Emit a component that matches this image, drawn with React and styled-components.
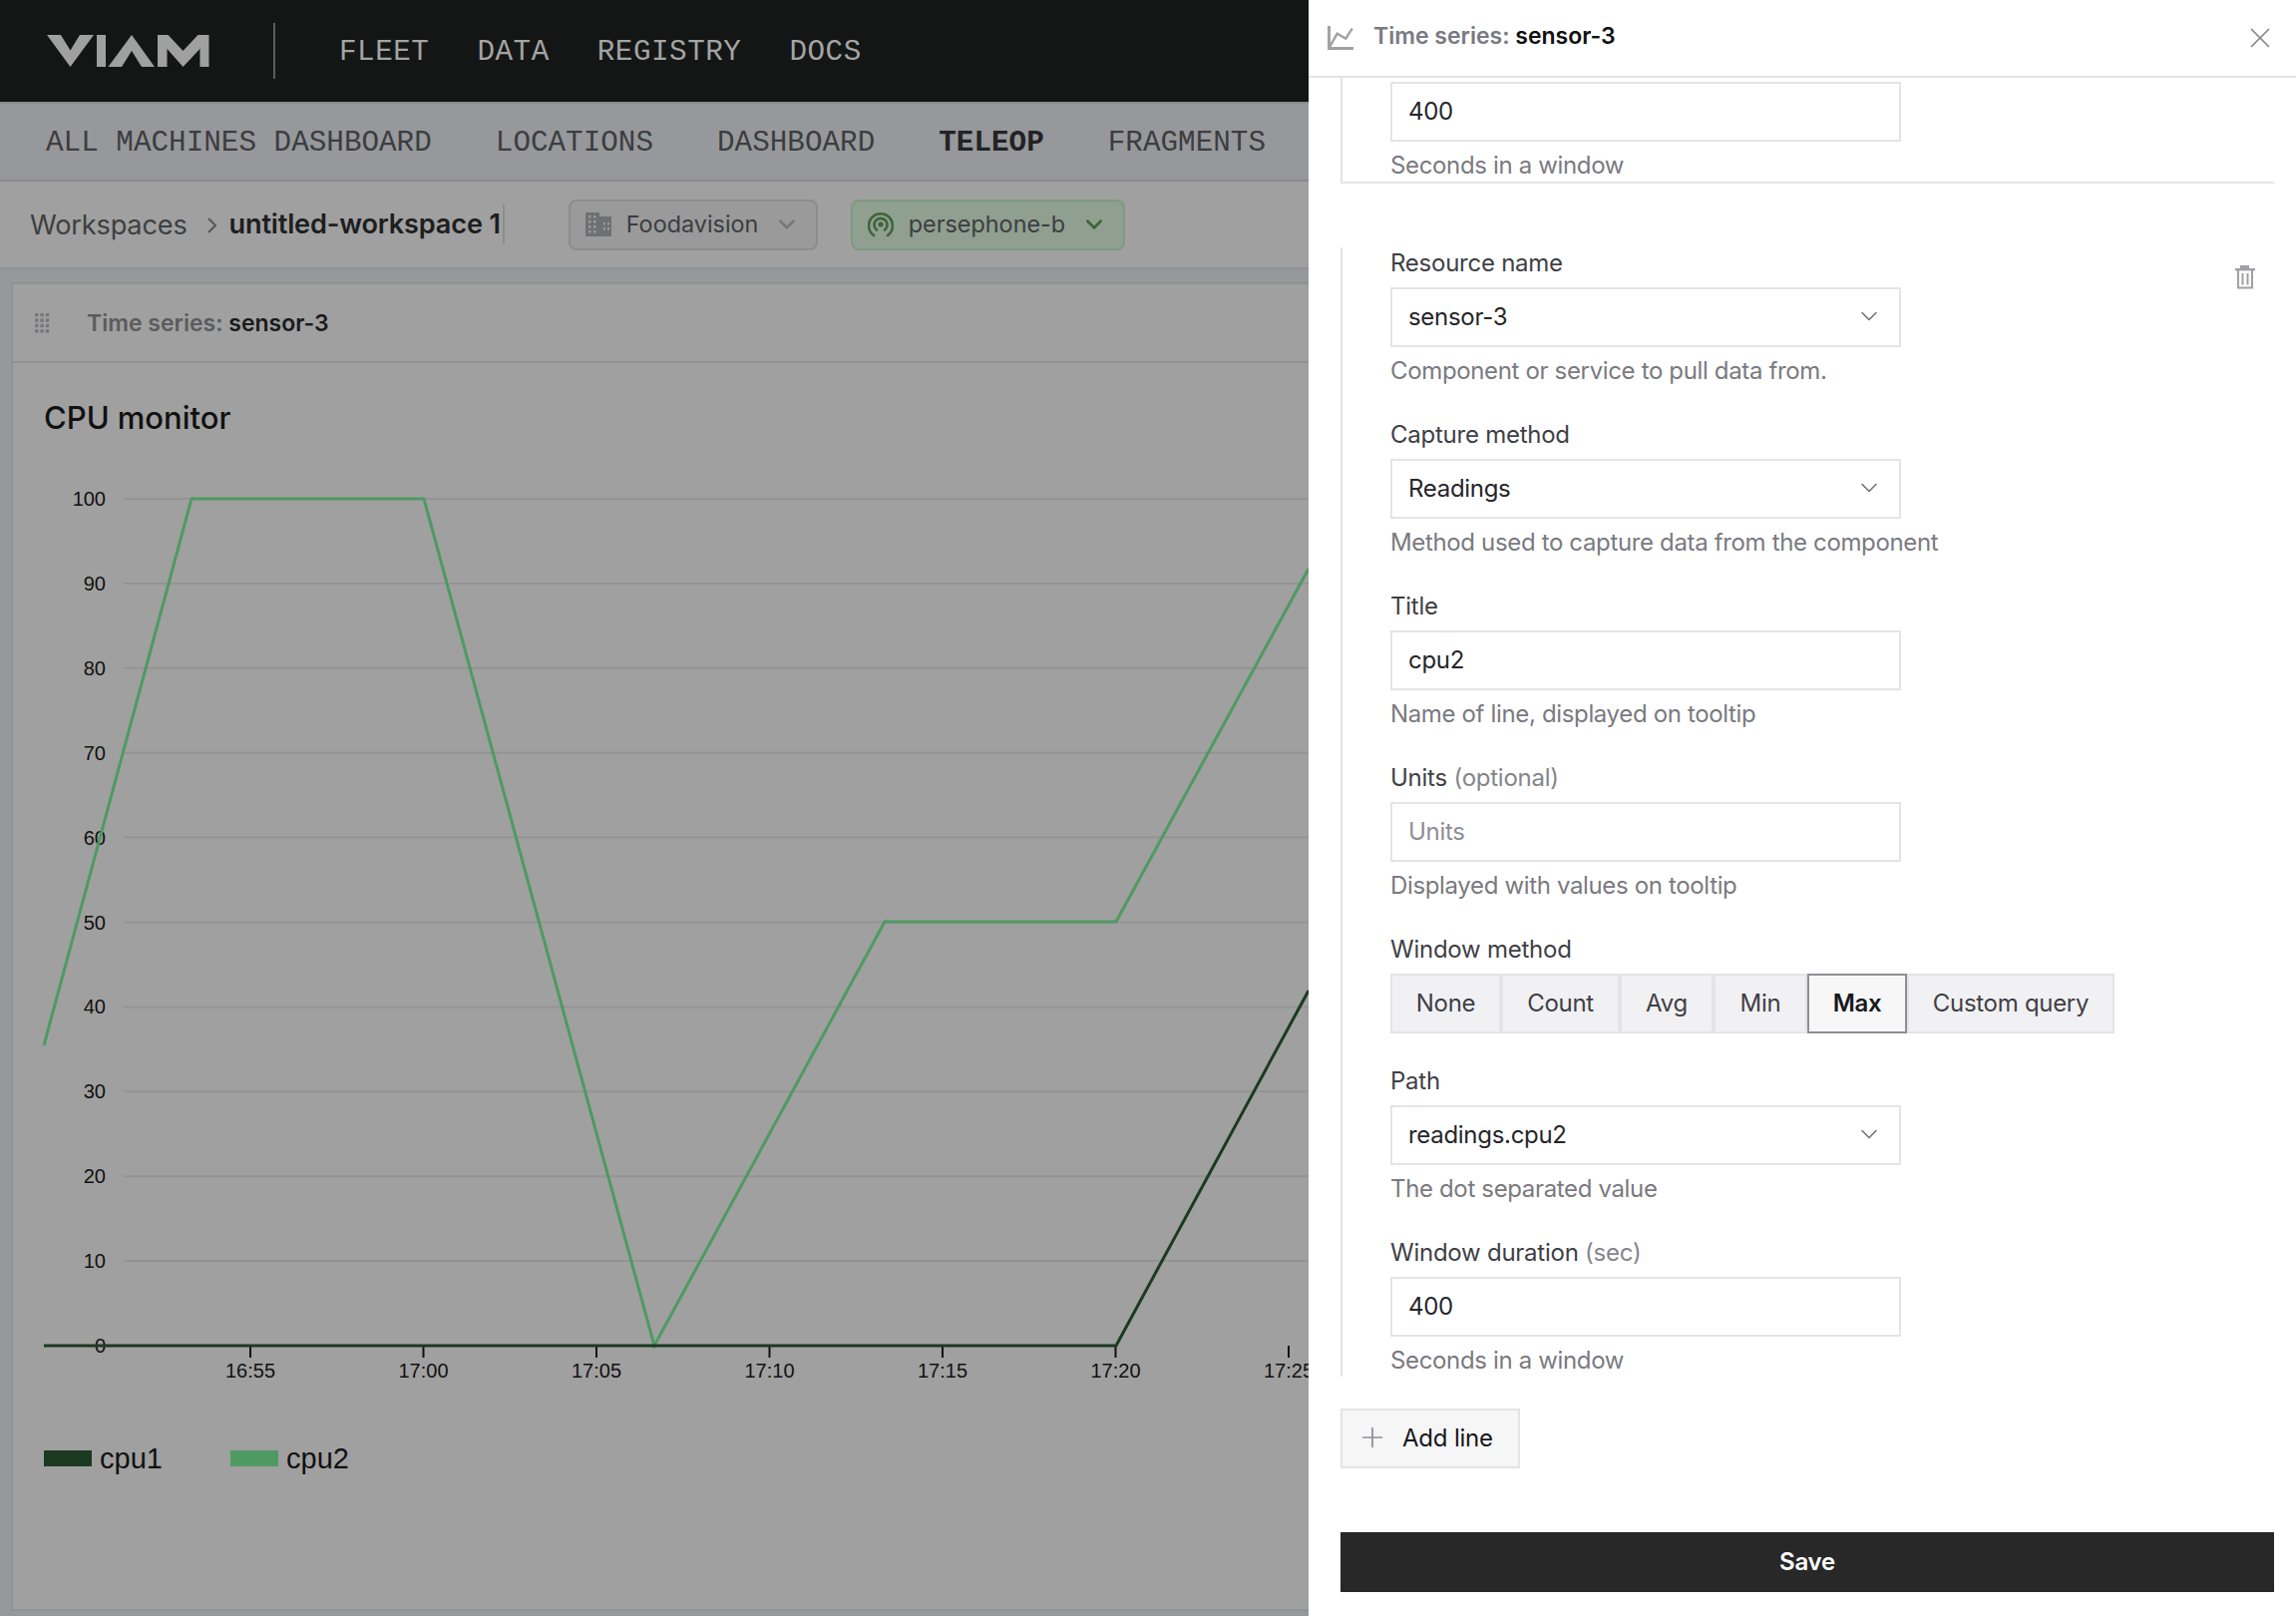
import React from "react";
import styled, { createGlobalStyle } from "styled-components";
import { ChevronDown, X, Plus } from "lucide-react";

const GlobalStyle = createGlobalStyle`
  html, body { margin: 0; padding: 0; background: #fff; }
  * { box-sizing: border-box; }
`;

const SANS = `"Inter", "Liberation Sans", sans-serif`;
const MONO = `"Liberation Mono", "DejaVu Sans Mono", monospace`;

const Page = styled.div`
  display: flex;
  width: 2302px;
  height: 1620px;
  overflow: hidden;
  font-family: ${SANS};
`;

const Dimmed = styled.div`
  width: 1312px;
  flex: 0 0 1312px;
  overflow: hidden;
  background: #97989b;
  display: flex;
  flex-direction: column;
`;

const TopBar = styled.div`
  height: 102px;
  background: #141615;
  display: flex;
  align-items: center;
  padding-left: 47px;
`;

const Divider = styled.div`
  width: 2px;
  height: 56px;
  background: #5c5d5d;
  margin: 0 64px 0 64px;
`;

const TopLink = styled.div`
  font-family: ${MONO};
  font-size: 29.3px;
  letter-spacing: 0.5px;
  padding-top: 2px;
  color: #a3a4a4;
  margin-right: 48px;
`;

const SubNav = styled.div`
  height: 80px;
  flex: none;
  border-top: 2px solid #8b8c8c;
  border-bottom: 2px solid #8a8a8b;
  display: flex;
  align-items: center;
  padding: 2px 0 0 46px;
  gap: 64px;
  white-space: nowrap;
`;

const SubLink = styled.div`
  font-family: ${MONO};
  font-size: 29.3px;
  font-weight: ${(p) => (p.$active ? 700 : 400)};
  color: ${(p) => (p.$active ? "#222326" : "#3c3d40")};
`;

const WorkspaceBar = styled.div`
  height: 88px;
  flex: none;
  background: #a0a0a0;
  border-bottom: 2px solid #909193;
  display: flex;
  align-items: center;
  padding-left: 30px;
`;

const Crumb = styled.span`
  font-size: 27.2px;
  color: #3e3f41;
  letter-spacing: -0.2px;
`;

const CrumbCurrent = styled.span`
  font-size: 27.2px;
  font-weight: 600;
  color: #1d1e20;
  letter-spacing: -0.2px;
  border-right: 2px solid #8c8c8c;
  padding-right: 2px;
  margin-right: 64px;
  line-height: 40px;
`;

const Pick = styled.div`
  height: 51px;
  width: ${(p) => p.$w}px;
  border: 2px solid ${(p) => (p.$green ? "#7f9a81" : "#8b8c8d")};
  background: ${(p) => (p.$green ? "#8f9f90" : "#9a9a9b")};
  border-radius: 8px;
  display: flex;
  align-items: center;
  padding: 0 16px 0 15px;
  gap: 15px;
  font-size: 23.4px;
  color: #3c3d40;
  margin-right: 33px;
  flex: none;
  white-space: nowrap;
`;

const PickLabel = styled.span`
  flex: 1;
  padding-bottom: 2px;
`;

const Gutter = styled.div`
  flex: 1;
  padding: 13px 0 5px 11px;
  display: flex;
  min-height: 0;
`;

const Card = styled.div`
  width: 1320px;
  flex: none;
  background: #a0a0a0;
  border: 2px solid #919294;
  display: flex;
  flex-direction: column;
`;

const CardHead = styled.div`
  height: 79px;
  flex: none;
  border-bottom: 2px solid #8f9092;
  display: flex;
  align-items: center;
  padding-left: 22px;
  gap: 37px;
  font-size: 23px;
  font-weight: 600;
`;

const Muted = styled.span`
  color: ${(p) => p.$c || "#5b5c5e"};
`;

const Strong = styled.span`
  color: ${(p) => p.$c || "#1b1b1c"};
`;

const ChartTitle = styled.h2`
  margin: 35px 0 31px 31px;
  font-size: 31px;
  font-weight: 500;
  line-height: 40px;
  color: #111;
`;

const ChartSvg = styled.svg`
  display: block;
  flex: none;
  font-family: "Liberation Sans", Arial, sans-serif;
`;

const Legend = styled.div`
  display: flex;
  margin: 56px 0 0 31px;
  font-family: "Liberation Sans", Arial, sans-serif;
  font-size: 29px;
  color: #111;
`;

const LegendItem = styled.div`
  display: flex;
  align-items: center;
  gap: 8px;
  width: 187px;
  line-height: 32px;
`;

const Swatch = styled.i`
  width: 48px;
  height: 16px;
  background: ${(p) => p.$c};
`;

const Panel = styled.div`
  width: 990px;
  flex: 0 0 990px;
  background: #fff;
  display: flex;
  flex-direction: column;
`;

const PanelHead = styled.div`
  height: 78px;
  flex: none;
  border-bottom: 2px solid #e4e4e7;
  display: flex;
  align-items: center;
  padding: 0 19px 4px 19px;
  font-size: 23px;
  font-weight: 600;
`;

const PanelTitle = styled.div`
  flex: 1;
  margin-left: 20px;
`;

const CloseIcon = styled(X)`
  margin-top: 4px;
`;

const PanelIcon = styled.svg`
  flex: none;
  margin-top: 4px;
`;

const PanelBody = styled.div`
  padding: 0 22px 0 32px;
  display: flex;
  flex-direction: column;
`;

const Section = styled.div`
  display: flex;
  justify-content: space-between;
  border-left: 2px solid #e4e4e7;
  border-bottom: ${(p) => (p.$closed ? "2px solid #e4e4e7" : "none")};
  padding: ${(p) => (p.$closed ? "4px" : "0")} 18px 0 48px;
  margin-bottom: ${(p) => (p.$closed ? "64px" : "0")};
`;

const Fields = styled.div`
  display: flex;
  flex-direction: column;
  gap: 32px;
`;

const Field = styled.div`
  display: flex;
  flex-direction: column;
  gap: 8px;
`;

const Label = styled.div`
  font-size: 24px;
  line-height: 32px;
  color: #3f3f46;
  letter-spacing: -0.25px;
`;

const Faint = styled.span`
  color: #85858b;
`;

const Help = styled.div`
  font-size: 24px;
  line-height: 32px;
  color: #7a7a80;
  letter-spacing: -0.35px;
`;

const InputBox = styled.div`
  width: 512px;
  height: 60px;
  border: 2px solid #e4e4e7;
  background: #fff;
  display: flex;
  align-items: center;
  justify-content: space-between;
  padding: 0 16px 2px 16px;
  font-size: 24px;
  letter-spacing: -0.3px;
  color: ${(p) => (p.$placeholder ? "#8e8e93" : "#26262a")};
`;

const Toggle = styled.div`
  display: flex;
`;

const ToggleBtn = styled.div`
  width: ${(p) => p.$w}px;
  height: 60px;
  display: flex;
  align-items: center;
  justify-content: center;
  padding-bottom: 2px;
  font-size: 24px;
  letter-spacing: -0.3px;
  font-weight: ${(p) => (p.$on ? 600 : 400)};
  color: ${(p) => (p.$on ? "#18181b" : "#3f3f46")};
  background: ${(p) => (p.$on ? "#f7f7f8" : "#f1f1f3")};
  border: 2px solid ${(p) => (p.$on ? "#8e8e93" : "#e4e4e7")};
`;

const TrashIcon = styled.svg`
  margin-top: 18px;
  flex: none;
`;

const AddLine = styled.div`
  margin-top: 32px;
  width: 180px;
  height: 60px;
  border: 2px solid #e4e4e7;
  background: #f6f6f7;
  display: flex;
  align-items: center;
  padding: 0 0 2px 14px;
  gap: 14px;
  font-size: 24px;
  letter-spacing: -0.2px;
  color: #18181b;
`;

const Save = styled.div`
  margin-top: 64px;
  height: 60px;
  background: #282828;
  color: #fff;
  font-size: 24px;
  font-weight: 600;
  letter-spacing: -0.2px;
  display: flex;
  align-items: center;
  justify-content: center;
  padding-bottom: 2px;
`;

const ChevronMark = styled.svg`
  margin: 2px 12px 0 20px;
  flex: none;
`;

function ViamLogo() {
  return (
    <svg width="163" height="32" viewBox="0 0 163 32" fill="#a0a0a0" style={{ flex: "none" }}>
      <polygon points="0,0 14,0 23.5,15.5 33,0 47,0 23.5,32" />
      <rect x="50" y="0" width="9" height="32" />
      <polygon points="61.5,32 85,0 108,32 95,32 85,16 75,32" />
      <polygon points="111,0 121.5,0 136.5,16 151.5,0 162.5,0 162.5,32 153.5,32 153.5,14 136.5,32 120.5,14 120.5,32 111,32" />
    </svg>
  );
}

function BuildingIcon() {
  return (
    <svg width="26" height="24" viewBox="0 0 26 24" fill="#6f7072" style={{ flex: "none" }}>
      <path d="M0 0h14v4h12v20H0z" />
      <g fill="#9a9a9b">
        {[3, 8].map((x) =>
          [3, 8, 13, 18].map((y) => <rect key={x + "-" + y} x={x} y={y} width="2.5" height="2.5" />)
        )}
        {[18, 22].map((x) =>
          [10, 15].map((y) => <rect key={x + "-" + y} x={x} y={y} width="2" height="2.5" />)
        )}
      </g>
    </svg>
  );
}

function SignalIcon() {
  return (
    <svg width="26" height="26" viewBox="0 0 26 26" fill="none" stroke="#3f6438" strokeWidth="2.6" style={{ flex: "none" }}>
      <path d="M6 24 A12 12 0 1 1 20 24" strokeLinecap="round" />
      <path d="M9 18.5 A6.5 6.5 0 1 1 17 18.5" strokeLinecap="round" />
      <circle cx="13" cy="13" r="2.6" fill="#3f6438" stroke="none" />
    </svg>
  );
}

function DragDots() {
  const dots = [];
  for (let r = 0; r < 4; r++) {
    for (let c = 0; c < 3; c++) {
      dots.push(<rect key={r + "-" + c} x={c * 5.4} y={r * 5.4} width="3.4" height="3.4" />);
    }
  }
  return (
    <svg width="15" height="20" viewBox="0 0 15 20" fill="#77787a" style={{ flex: "none" }}>
      {dots}
    </svg>
  );
}

function LineChartIcon() {
  return (
    <PanelIcon width="26" height="24" viewBox="0 0 26 24" fill="none" stroke="#a0a0a5">
      <path d="M1.5 0V22.5H26" strokeWidth="3" />
      <path d="M2.5 20.3L9.7 7.7L18.3 12.7L24.7 2.7" strokeWidth="2.4" />
    </PanelIcon>
  );
}

function Trash() {
  return (
    <TrashIcon width="22" height="24" viewBox="0 0 22 24" fill="#a0a0a5">
      <rect x="6" y="0" width="9" height="3" />
      <rect x="1" y="3" width="20" height="2.4" />
      <path d="M4 5V22.5H18V5" fill="none" stroke="#a0a0a5" strokeWidth="2" />
      <rect x="7.5" y="8" width="2" height="11.5" />
      <rect x="12.5" y="8" width="2" height="11.5" />
    </TrashIcon>
  );
}

// chart coordinates are page pixels, the viewBox moves them into the card
const Y_ZERO = 1349;
const Y_STEP = 84.9;
const yTicks = [0, 10, 20, 30, 40, 50, 60, 70, 80, 90, 100];
const xTicks = [
  ["16:55", 251],
  ["17:00", 424.5],
  ["17:05", 598],
  ["17:10", 771.5],
  ["17:15", 945],
  ["17:20", 1118.5],
  ["17:25", 1292],
];
const cpu1 = "44,1349 1119,1349 1312,993";
const cpu2 = "44,1048 192,500 425,500 656,1349 887,924 1119,924 1312,570";

function Chart() {
  return (
    <ChartSvg width="1316" height="920" viewBox="13 470 1316 920">
      {yTicks.map((v) => {
        const y = Y_ZERO - (v / 10) * Y_STEP;
        return (
          <g key={v}>
            {v > 0 && <line x1="124" x2="1329" y1={y} y2={y} stroke="#939393" strokeWidth="2" />}
            <text x="106" y={y + 7} textAnchor="end" fontSize="20" fill="#111">
              {v}
            </text>
          </g>
        );
      })}
      {xTicks.map(([t, x]) => (
        <g key={t}>
          <line x1={x} x2={x} y1={Y_ZERO} y2={Y_ZERO + 12} stroke="#111" strokeWidth="2" />
          <text x={x} y={Y_ZERO + 32} textAnchor="middle" fontSize="20" fill="#111">
            {t}
          </text>
        </g>
      ))}
      <polyline points={cpu2} fill="none" stroke="#4e9a62" strokeWidth="3" />
      <polyline points={cpu1} fill="none" stroke="#1b3a20" strokeWidth="3" />
    </ChartSvg>
  );
}

function Select({ value }) {
  return (
    <InputBox>
      {value}
      <ChevronDown size={28} color="#71717a" strokeWidth={1.4} />
    </InputBox>
  );
}

const methods = [
  ["None", 111],
  ["Count", 119],
  ["Avg", 94],
  ["Min", 94],
  ["Max", 100],
  ["Custom query", 208],
];

export default function App() {
  return (
    <Page>
      <GlobalStyle />
      <Dimmed>
        <TopBar>
          <ViamLogo />
          <Divider />
          <TopLink>FLEET</TopLink>
          <TopLink>DATA</TopLink>
          <TopLink>REGISTRY</TopLink>
          <TopLink>DOCS</TopLink>
        </TopBar>
        <SubNav>
          <SubLink>ALL MACHINES DASHBOARD</SubLink>
          <SubLink>LOCATIONS</SubLink>
          <SubLink>DASHBOARD</SubLink>
          <SubLink $active>TELEOP</SubLink>
          <SubLink>FRAGMENTS</SubLink>
        </SubNav>
        <WorkspaceBar>
          <Crumb>Workspaces</Crumb>
          <ChevronMark width="10" height="18" viewBox="0 0 10 18" fill="none" stroke="#55565a" strokeWidth="2">
            <path d="M1 2l7 7-7 7" />
          </ChevronMark>
          <CrumbCurrent>untitled-workspace 1</CrumbCurrent>
          <Pick $w={250}>
            <BuildingIcon />
            <PickLabel>Foodavision</PickLabel>
            <ChevronDown size={26} color="#77787a" strokeWidth={2.4} />
          </Pick>
          <Pick $w={275} $green>
            <SignalIcon />
            <PickLabel>persephone-b</PickLabel>
            <ChevronDown size={26} color="#3f6438" strokeWidth={2.6} />
          </Pick>
        </WorkspaceBar>
        <Gutter>
          <Card>
            <CardHead>
              <DragDots />
              <div>
                <Muted>Time series: </Muted>
                <Strong>sensor-3</Strong>
              </div>
            </CardHead>
            <ChartTitle>CPU monitor</ChartTitle>
            <Chart />
            <Legend>
              <LegendItem>
                <Swatch $c="#1b3a20" />
                cpu1
              </LegendItem>
              <LegendItem>
                <Swatch $c="#4e9a62" />
                cpu2
              </LegendItem>
            </Legend>
          </Card>
        </Gutter>
      </Dimmed>
      <Panel>
        <PanelHead>
          <LineChartIcon />
          <PanelTitle>
            <Muted $c="#7a7a80">Time series: </Muted>
            <Strong $c="#111">sensor-3</Strong>
          </PanelTitle>
          <CloseIcon size={34} color="#85858b" strokeWidth={1.2} />
        </PanelHead>
        <PanelBody>
          <Section $closed>
            <Fields>
              <Field>
                <InputBox>400</InputBox>
                <Help>Seconds in a window</Help>
              </Field>
            </Fields>
          </Section>
          <Section>
            <Fields>
              <Field>
                <Label>Resource name</Label>
                <Select value="sensor-3" />
                <Help>Component or service to pull data from.</Help>
              </Field>
              <Field>
                <Label>Capture method</Label>
                <Select value="Readings" />
                <Help>Method used to capture data from the component</Help>
              </Field>
              <Field>
                <Label>Title</Label>
                <InputBox>cpu2</InputBox>
                <Help>Name of line, displayed on tooltip</Help>
              </Field>
              <Field>
                <Label>
                  Units <Faint>(optional)</Faint>
                </Label>
                <InputBox $placeholder>Units</InputBox>
                <Help>Displayed with values on tooltip</Help>
              </Field>
              <Field>
                <Label>Window method</Label>
                <Toggle>
                  {methods.map(([m, w]) => (
                    <ToggleBtn key={m} $w={w} $on={m === "Max"}>
                      {m}
                    </ToggleBtn>
                  ))}
                </Toggle>
              </Field>
              <Field>
                <Label>Path</Label>
                <Select value="readings.cpu2" />
                <Help>The dot separated value</Help>
              </Field>
              <Field>
                <Label>
                  Window duration <Faint>(sec)</Faint>
                </Label>
                <InputBox>400</InputBox>
                <Help>Seconds in a window</Help>
              </Field>
            </Fields>
            <Trash />
          </Section>
          <AddLine>
            <Plus size={32} color="#8e8e93" strokeWidth={1.3} />
            Add line
          </AddLine>
          <Save>Save</Save>
        </PanelBody>
      </Panel>
    </Page>
  );
}
